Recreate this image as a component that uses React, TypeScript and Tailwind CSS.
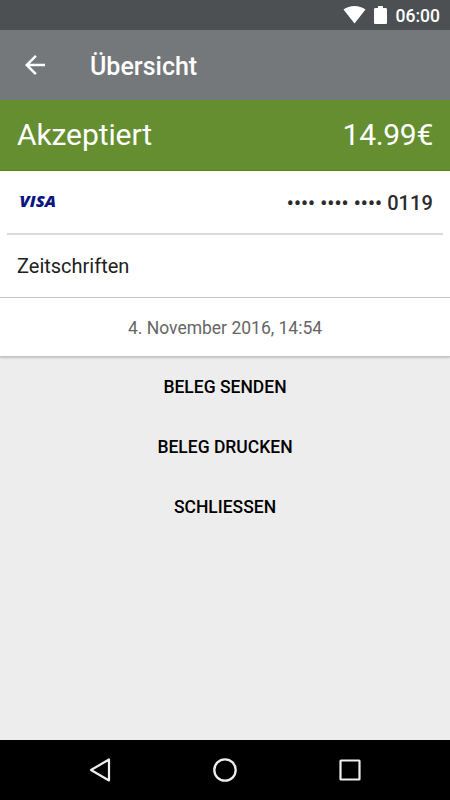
const actions = ['Beleg senden', 'Beleg drucken', 'Schliessen']

function StatusBar() {
  return (
    <div className="flex h-[30px] items-center justify-end bg-[#4c5053] pr-[10px] text-white">
      <svg width="23" height="18" viewBox="0 0 23 18" fill="#fff">
        <path d="M11.5 17.5 0.5 3.6C3.6 1.3 7.4 0 11.5 0s7.9 1.3 11 3.6z" />
      </svg>
      <svg className="ml-[8px]" width="13" height="18" viewBox="0 0 13 18" fill="#fff">
        <path d="M4 0h5v2h2.6c.8 0 1.4.6 1.4 1.3v13.4c0 .7-.6 1.3-1.3 1.3H1.3C.6 18 0 17.4 0 16.7V3.3C0 2.6.6 2 1.4 2H4z" />
      </svg>
      <span className="ml-[9px] pt-px text-[17.5px] leading-[30px] font-medium">06:00</span>
    </div>
  )
}

function VisaLogo() {
  return (
    <svg width="44" height="24" viewBox="0 0 44 24">
      <path d="M1.5 6h4.5l1.6 4.2C6.3 8 4.3 6.7 1.5 6.3z" fill="#7d86a8" />
      <text
        x="2.5"
        y="17.3"
        textLength="36.5"
        lengthAdjust="spacingAndGlyphs"
        fill="#0b1580"
        fontFamily="Open Sans, sans-serif"
        fontSize="16"
        fontWeight="800"
        fontStyle="italic"
      >
        VISA
      </text>
    </svg>
  )
}

function NavBar() {
  return (
    <div className="flex h-[60px] items-center justify-between bg-black px-[85px]">
      <svg width="30" height="30" viewBox="0 0 30 30" fill="none" stroke="#eee" strokeWidth="2.2">
        <path d="M6 15 24 4.5v21z" strokeLinejoin="round" />
      </svg>
      <svg width="30" height="30" viewBox="0 0 30 30" fill="none" stroke="#eee" strokeWidth="2.3">
        <circle cx="15" cy="15" r="10.7" />
      </svg>
      <svg width="30" height="30" viewBox="0 0 30 30" fill="none" stroke="#eee" strokeWidth="2.2">
        <rect x="5.5" y="5.5" width="19" height="19" rx="0.5" />
      </svg>
    </div>
  )
}

export default function App() {
  return (
    <div className="flex h-[800px] w-[450px] flex-col overflow-hidden bg-[#ededed] font-['Roboto','Noto_Sans',sans-serif]">
      <StatusBar />
      <header className="flex h-[70px] items-center bg-[#75787b] pl-[20px] text-white">
        <svg width="30" height="30" viewBox="0 0 24 24" fill="#fff">
          <path d="M20 11H7.83l5.59-5.59L12 4l-8 8 8 8 1.41-1.41L7.83 13H20v-2z" />
        </svg>
        <h1 className="ml-[40px] pt-[3px] text-[25px] leading-[30px] font-medium">Übersicht</h1>
      </header>

      <div className="flex h-[71px] items-center justify-between border-b border-[#548a16] bg-[#648e30] px-[17px] pb-px text-[30px] text-white">
        <span className="tracking-[-0.1px]">Akzeptiert</span>
        <span className="tracking-[-0.3px]">14.99€</span>
      </div>

      <section className="bg-white shadow-[0_1px_2px_rgba(0,0,0,0.2)]">
        <div className="mx-[7px] flex h-[64px] items-center justify-between border-b-2 border-[#dadada] px-[10px]">
          <VisaLogo />
          <span className="pt-[2px] text-[20px] font-medium tracking-[0.1px] text-[#2b2b2b]">•••• •••• •••• 0119</span>
        </div>
        <div className="flex h-[63px] items-center border-b border-[#c4c4c4] px-[17px] text-[20px] text-[#212121]">
          Zeitschriften
        </div>
        <div className="flex h-[59px] items-center justify-center border-b border-[#c4c4c4] pt-[2px] text-[17.5px] text-[#666]">
          4. November 2016, 14:54
        </div>
      </section>

      <div className="flex flex-1 flex-col items-center">
        {actions.map((label) => (
          <button key={label} className="h-[60px] pt-px text-[17.5px] font-medium text-black uppercase">
            {label}
          </button>
        ))}
      </div>
      <NavBar />
    </div>
  )
}
